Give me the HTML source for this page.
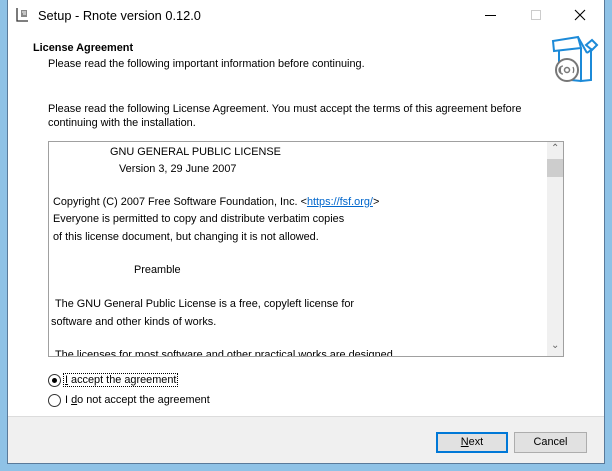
<!DOCTYPE html>
<html><head><style>
*{margin:0;padding:0;box-sizing:border-box}
body{width:612px;height:471px;background:#8fc2e6;position:relative;overflow:hidden;font-family:"Liberation Sans",sans-serif;font-size:10.9px;color:#000}
.win{position:absolute;left:7px;top:0;width:598px;height:464px;background:#fff;border:1px solid #5a7a9a;border-top:none}
.a{position:absolute;white-space:nowrap}
.foot{position:absolute;left:0;top:416px;width:596px;height:47px;background:#f0f0f0;border-top:1px solid #dcdcdc}
.btn{position:absolute;height:21px;background:#e1e1e1;border:1px solid #adadad;text-align:center;line-height:19px}
.memo{position:absolute;left:40px;top:141px;width:516px;height:216px;border:1px solid #a0a0a0;overflow:hidden}
.memo .a{left:4px}
.radio{position:absolute;width:13px;height:13px;border:1px solid #333;border-radius:50%;background:#fff}
</style></head><body>
<div class="win">
<svg class="a" style="left:8px;top:7px" width="14" height="16" viewBox="0 0 14 16"><path d="M1 1v13h11" fill="none" stroke="#333" stroke-width="1.3"/><path d="M5 3h6v7H5z" fill="#888"/><path d="M6 5h4M7 7h3" stroke="#fff"/></svg>
<div class="a" style="left:30px;top:8px;font-size:12.8px">Setup - Rnote version 0.12.0</div>
<div class="a" style="left:477px;top:15px;width:11px;height:1px;background:#000"></div>
<div class="a" style="left:523px;top:10px;width:10px;height:10px;border:1px solid #ccc"></div>
<svg class="a" style="left:566px;top:9px" width="12" height="12"><path d="M1 1L11 11M11 1L1 11" stroke="#000" stroke-width="1.1"/></svg>
<div class="a" style="left:25px;top:42px;font-weight:bold">License Agreement</div>
<div class="a" style="left:40px;top:58px">Please read the following important information before continuing.</div>
<svg class="a" style="left:542px;top:33px" width="52" height="52" viewBox="0 0 52 52"><g fill="none" stroke="#1c8ad8" stroke-width="2"><path d="M3 8l25-4 3 11-27 3z"/><path d="M28 4l9 16M31 15v33l10-1V17l-4 3"/><path d="M9 18v20M31 48l-10-1"/><path d="M36 12l6-5 5 5-5 5z"/></g><circle cx="17" cy="37" r="11" fill="#fff" stroke="#777" stroke-width="2"/><circle cx="17" cy="37" r="2.5" fill="none" stroke="#777" stroke-width="1.5"/><path d="M11 40a7 7 0 0 1 0-6M23 34a7 7 0 0 1 0 6M13 41a4 4 0 0 1 0-8" fill="none" stroke="#777" stroke-width="1.3"/></svg>
<div class="a" style="left:40px;top:103px">Please read the following License Agreement. You must accept the terms of this agreement before</div>
<div class="a" style="left:40px;top:117px">continuing with the installation.</div>
<div class="memo">
<div class="a" style="left:61px;top:4px">GNU GENERAL PUBLIC LICENSE</div>
<div class="a" style="left:70px;top:21px">Version 3, 29 June 2007</div>
<div class="a" style="top:54px">Copyright (C) 2007 Free Software Foundation, Inc. &lt;<span style="color:#0066cc;text-decoration:underline">https://fsf.org/</span>&gt;</div>
<div class="a" style="top:71px">Everyone is permitted to copy and distribute verbatim copies</div>
<div class="a" style="top:89px">of this license document, but changing it is not allowed.</div>
<div class="a" style="left:85px;top:122px">Preamble</div>
<div class="a" style="left:6px;top:156px">The GNU General Public License is a free, copyleft license for</div>
<div class="a" style="left:2px;top:174px">software and other kinds of works.</div>
<div class="a" style="left:6px;top:207px">The licenses for most software and other practical works are designed</div>
<div class="a" style="left:498px;top:0;width:17px;height:214px;background:#f0f0f0"></div>
<div class="a" style="left:498px;top:17px;width:17px;height:18px;background:#cdcdcd"></div>
<div class="a" style="left:502px;top:1px;color:#666;font-size:10px">&#8963;</div>
<div class="a" style="left:502px;top:198px;color:#666;font-size:10px">&#8964;</div>
</div>
<div class="radio" style="left:40px;top:374px"><div style="position:absolute;left:3px;top:3px;width:5px;height:5px;border-radius:50%;background:#000"></div></div>
<div class="a" style="left:55px;top:373px;border:1px dotted #000;padding:0 1px"><u>I</u> accept the agreement</div>
<div class="radio" style="left:40px;top:394px"></div>
<div class="a" style="left:57px;top:394px">I <u>d</u>o not accept the agreement</div>
<div class="foot">
<div class="btn" style="left:428px;top:15px;width:72px;border:2px solid #0078d7;line-height:17px"><u>N</u>ext</div>
<div class="btn" style="left:506px;top:15px;width:73px">Cancel</div>
</div>
</div>
</body></html>
